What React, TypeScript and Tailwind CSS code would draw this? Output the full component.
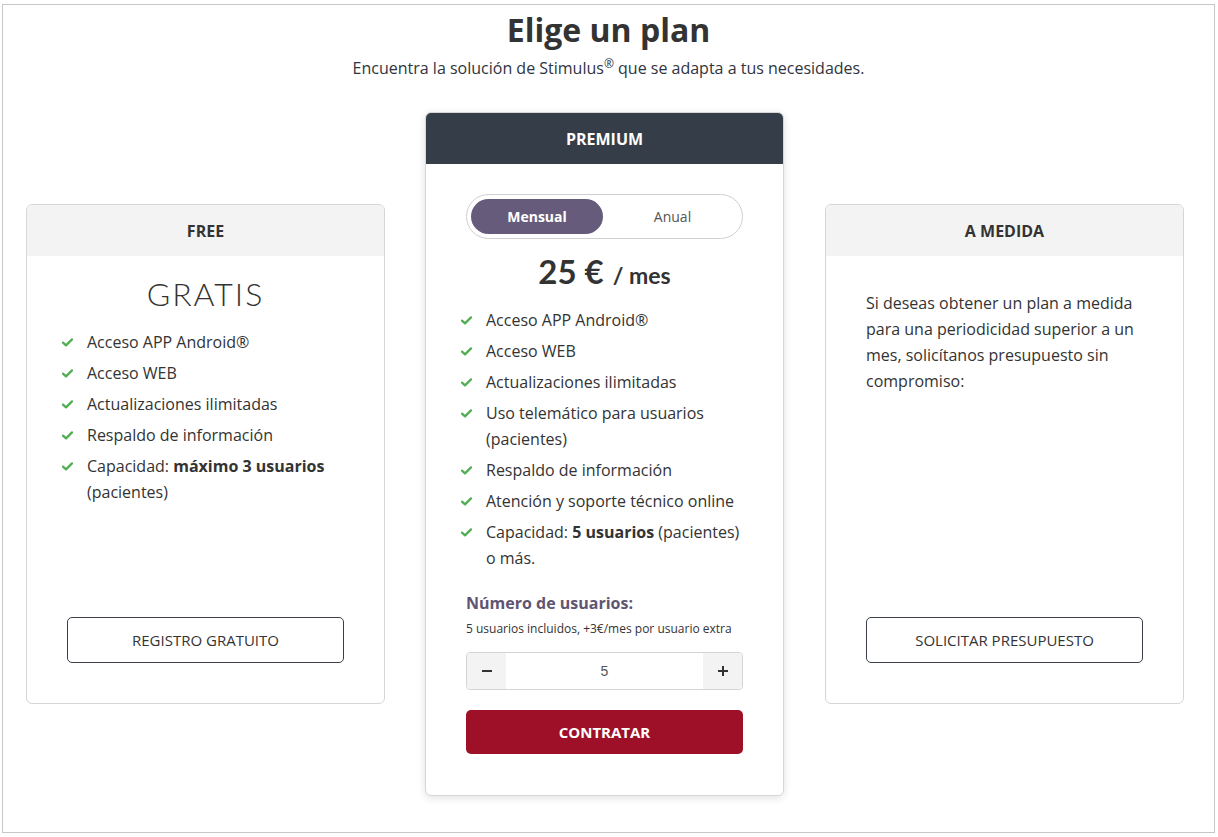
import { useState } from "react";

const sans = { fontFamily: '"Open Sans", "Liberation Sans", sans-serif' };
const geo = { fontFamily: 'Lato, "Open Sans", sans-serif' };

const Check = () => (
  <svg width="11" height="9" viewBox="0 0 11 9" className="mt-[9px]">
    <path d="M1 4.6 L4 7.4 L10 1.4" fill="none" stroke="#4fae4f" strokeWidth="2.2" strokeLinecap="round" strokeLinejoin="round" />
  </svg>
);

function Feature({ children }: { children: React.ReactNode }) {
  return (
    <li className="flex text-[16px] leading-[26px] text-[#333]">
      <span className="w-[25px] -ml-[5px] shrink-0 flex">
        <Check />
      </span>
      <span>{children}</span>
    </li>
  );
}

export default function App() {
  const [billing, setBilling] = useState<"mensual" | "anual">("mensual");
  const [users, setUsers] = useState(5);

  return (
    <div style={sans} className="w-[1218px] h-[837px] bg-white pt-[4px] pl-[2px]">
      <div className="w-[1213px] h-[829px] border border-[#c6c6c6] flex flex-col items-center">
        <h1 className="mt-[5px] text-[32px] leading-[40px] font-bold text-[#333]">Elige un plan</h1>
        <p className="mt-[6px] text-[16px] leading-[24px] text-[#2f3440]">
          Encuentra la solución de Stimulus<sup className="text-[12px]">®</sup> que se adapta a tus necesidades.
        </p>

        <div className="mt-[32px] w-full flex items-center pl-[23px]">
          {/* FREE */}
          <div className="w-[359px] h-[500px] border border-[#d6d6d6] rounded-[6px] overflow-hidden flex flex-col bg-white">
            <div className="h-[51px] bg-[#f3f3f3] flex items-center justify-center text-[16px] font-bold text-[#333]">FREE</div>
            <div className="flex-1 flex flex-col px-[40px] pb-[40px]">
              <div style={geo} className="mt-[20px] text-center text-[32px] leading-[36px] font-light tracking-[2px] text-[#333]">GRATIS</div>
              <ul className="mt-[17px] flex flex-col gap-[5px]">
                <Feature>Acceso APP Android®</Feature>
                <Feature>Acceso WEB</Feature>
                <Feature>Actualizaciones ilimitadas</Feature>
                <Feature>Respaldo de información</Feature>
                <Feature>
                  Capacidad: <b>máximo 3 usuarios</b> (pacientes)
                </Feature>
              </ul>
              <button className="mt-auto h-[46px] w-full border border-[#3a3f47] rounded-[5px] text-[15px] text-[#333] uppercase">
                Registro gratuito
              </button>
            </div>
          </div>

          {/* PREMIUM */}
          <div className="ml-[40px] w-[359px] border border-[#d6d6d6] rounded-[6px] overflow-hidden flex flex-col bg-white shadow-[0_2px_8px_rgba(0,0,0,0.12)]">
            <div className="h-[51px] bg-[#353e48] flex items-center justify-center text-[16px] font-bold text-white">PREMIUM</div>
            <div className="flex flex-col px-[40px] pb-[41px]">
              <div className="mt-[30px] h-[45px] rounded-full border border-[#cfcfcf] p-[4px] flex">
                <button
                  onClick={() => setBilling("mensual")}
                  className={`w-[132px] rounded-full text-[14px] ${billing === "mensual" ? "bg-[#675b7c] text-white font-bold" : "text-[#555]"}`}
                >
                  Mensual
                </button>
                <button
                  onClick={() => setBilling("anual")}
                  className={`flex-1 rounded-full text-[14px] pl-[4px] ${billing === "anual" ? "bg-[#675b7c] text-white font-bold" : "text-[#555]"}`}
                >
                  Anual
                </button>
              </div>
              <div style={geo} className="mt-[14px] h-[36px] flex items-baseline justify-center font-bold text-[#333]">
                <span className="text-[33px] leading-[36px]">25 €</span>
                <span className="text-[23px] leading-[36px] ml-[9px]">/ mes</span>
              </div>
              <ul className="mt-[18px] flex flex-col gap-[5px]">
                <Feature>Acceso APP Android®</Feature>
                <Feature>Acceso WEB</Feature>
                <Feature>Actualizaciones ilimitadas</Feature>
                <Feature>Uso telemático para usuarios (pacientes)</Feature>
                <Feature>Respaldo de información</Feature>
                <Feature>Atención y soporte técnico online</Feature>
                <Feature>
                  Capacidad: <b>5 usuarios</b> (pacientes) o más.
                </Feature>
              </ul>
              <div className="mt-[20px] text-[16px] leading-[24px] font-bold text-[#5f5572]">Número de usuarios:</div>
              <div className="mt-[5px] text-[12px] leading-[18px] text-[#333]">5 usuarios incluidos, +3€/mes por usuario extra</div>
              <div className="mt-[14px] h-[38px] border border-[#d3d3d8] rounded-[4px] overflow-hidden flex">
                <button
                  onClick={() => setUsers((u) => Math.max(5, u - 1))}
                  className="w-[39px] bg-[#f3f3f4] flex items-center justify-center"
                >
                  <svg width="12" height="12" viewBox="0 0 12 12">
                    <path d="M1 6 H11" stroke="#333" strokeWidth="2" />
                  </svg>
                </button>
                <div className="flex-1 flex items-center justify-center text-[14px] text-[#555]" style={{ fontFamily: '"Liberation Sans", sans-serif' }}>
                  {users}
                </div>
                <button
                  onClick={() => setUsers((u) => u + 1)}
                  className="w-[39px] bg-[#f3f3f4] flex items-center justify-center"
                >
                  <svg width="12" height="12" viewBox="0 0 12 12">
                    <path d="M1 6 H11 M6 1 V11" stroke="#333" strokeWidth="2" />
                  </svg>
                </button>
              </div>
              <button className="mt-[20px] h-[44px] w-full bg-[#9e1027] rounded-[5px] text-[15px] font-bold text-white">CONTRATAR</button>
            </div>
          </div>

          {/* A MEDIDA */}
          <div className="ml-[41px] w-[359px] h-[500px] border border-[#d6d6d6] rounded-[6px] overflow-hidden flex flex-col bg-white">
            <div className="h-[51px] bg-[#f3f3f3] flex items-center justify-center text-[16px] font-bold text-[#333]">A MEDIDA</div>
            <div className="flex-1 flex flex-col px-[40px] pb-[40px]">
              <p className="mt-[34px] text-[16px] leading-[26px] text-[#333]">
                Si deseas obtener un plan a medida para una periodicidad superior a un mes, solicítanos presupuesto sin compromiso:
              </p>
              <button className="mt-auto h-[46px] w-full border border-[#3a3f47] rounded-[5px] text-[15px] text-[#333] uppercase">
                Solicitar presupuesto
              </button>
            </div>
          </div>
        </div>
      </div>
    </div>
  );
}
